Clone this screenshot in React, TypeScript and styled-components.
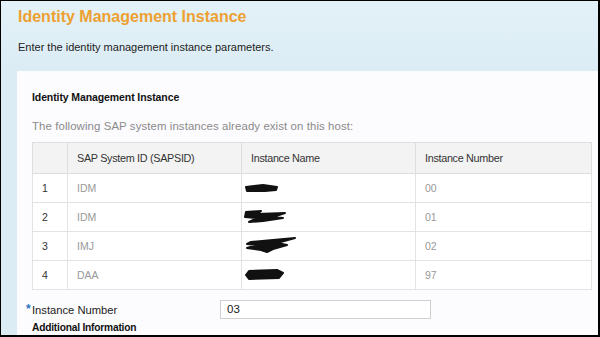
import React from "react";
import styled, { createGlobalStyle } from "styled-components";

const Global = createGlobalStyle`
  html, body { margin: 0; padding: 0; background: #ffffff; }
  * { box-sizing: border-box; }
`;

const Frame = styled.div`
  width: 600px;
  height: 337px;
  overflow: hidden;
  border-style: solid;
  border-color: #000;
  border-width: 1px 2px 2px 1px;
  background: linear-gradient(#e3f2f9, #dcecf4 70px, #dcecf4);
  display: flex;
  flex-direction: column;
  font-family: "Liberation Sans", Arial, sans-serif;
`;

const Header = styled.header`
  height: 70px;
  padding: 6px 0 0 17px;
`;

const Title = styled.h1`
  margin: 0;
  font-size: 16px;
  line-height: 20px;
  font-weight: bold;
  color: #eda032;
`;

const Subtitle = styled.p`
  margin: 13px 0 0;
  font-size: 11px;
  line-height: 14px;
  color: #222;
`;

const Panel = styled.section`
  flex: 1;
  margin-left: 16px;
  background: #fcfbfe;
  padding: 19px 0 0 15px;
`;

const SectionHeading = styled.h2`
  margin: 0;
  font-size: 10.5px;
  line-height: 14px;
  font-weight: bold;
  color: #111;
  letter-spacing: -0.1px;
`;

const Intro = styled.p`
  margin: 15px 0 0;
  font-size: 11.4px;
  line-height: 14px;
  color: #8a8a8a;
  letter-spacing: 0.1px;
`;

const Table = styled.table`
  margin-top: 9px;
  border-collapse: collapse;
  width: 559px;
  table-layout: fixed;
  border: 1px solid #dedede;
`;

const HeadCell = styled.th<{ $w: number }>`
  width: ${(p) => p.$w}px;
  height: 31px;
  padding: 0 0 0 9px;
  text-align: left;
  font-weight: normal;
  font-size: 10.8px;
  color: #333;
  background: #f3f3f3;
  border: 1px solid #dedede;
  letter-spacing: -0.3px;
`;

const Cell = styled.td<{ $dark?: boolean }>`
  height: 29px;
  padding: 0 0 0 9px;
  font-size: 10.5px;
  color: ${(p) => (p.$dark ? "#333" : "#999999")};
  background: #fff;
  border: 1px solid #e3e3e3;
  vertical-align: middle;
`;

const Scribble = styled.svg`
  display: block;
  margin-left: -8px;
`;

const FormRow = styled.div`
  margin-top: 10px;
  display: flex;
  align-items: center;
  height: 19px;
`;

const Label = styled.label`
  width: 188px;
  font-size: 11.2px;
  color: #222;
  position: relative;
`;

const Star = styled.span`
  position: absolute;
  left: -6px;
  top: -2px;
  color: #2a76bf;
  font-weight: bold;
  font-size: 12px;
`;

const Input = styled.div`
  width: 211px;
  height: 19px;
  border: 1px solid #cfcfcf;
  background: #fff;
  padding-left: 6px;
  font-size: 11.5px;
  line-height: 17px;
  color: #222;
`;

const SubHeading = styled.h3`
  margin: 2px 0 0;
  font-size: 10.2px;
  line-height: 14px;
  font-weight: bold;
  color: #111;
  letter-spacing: -0.2px;
`;

const rows = [
  { n: "1", sid: "IDM", num: "00", path: "M3 5 L20 3 L34 5 L33 8 L22 9 L4 9 Z", w: 38, h: 12 },
  { n: "2", sid: "IDM", num: "01", path: "M3 3 L18 2 L14 5 L42 4 L30 8 L40 9 L20 12 L6 13 L14 9 L2 8 Z", w: 46, h: 16 },
  { n: "3", sid: "IMJ", num: "02", path: "M8 5 L30 3 L52 1 L34 6 L44 8 L30 12 L24 15 L18 13 L4 11 L14 8 L4 7 Z", w: 56, h: 18 },
  { n: "4", sid: "DAA", num: "97", path: "M6 2 L34 1 L40 4 L36 9 L6 10 L3 6 Z", w: 44, h: 12 },
];

export default function App() {
  return (
    <>
      <Global />
      <Frame>
        <Header>
          <Title>Identity Management Instance</Title>
          <Subtitle>Enter the identity management instance parameters.</Subtitle>
        </Header>
        <Panel>
          <SectionHeading>Identity Management Instance</SectionHeading>
          <Intro>The following SAP system instances already exist on this host:</Intro>
          <Table>
            <thead>
              <tr>
                <HeadCell $w={35}></HeadCell>
                <HeadCell $w={174}>SAP System ID (SAPSID)</HeadCell>
                <HeadCell $w={174}>Instance Name</HeadCell>
                <HeadCell $w={176}>Instance Number</HeadCell>
              </tr>
            </thead>
            <tbody>
              {rows.map((r) => (
                <tr key={r.n}>
                  <Cell $dark>{r.n}</Cell>
                  <Cell>{r.sid}</Cell>
                  <Cell>
                    <Scribble width={r.w} height={r.h} viewBox={`0 0 ${r.w} ${r.h}`}>
                      <path d={r.path} fill="#111" stroke="#111" strokeWidth="2" strokeLinejoin="round" />
                    </Scribble>
                  </Cell>
                  <Cell>{r.num}</Cell>
                </tr>
              ))}
            </tbody>
          </Table>
          <FormRow>
            <Label>
              <Star>*</Star>Instance Number
            </Label>
            <Input>03</Input>
          </FormRow>
          <SubHeading>Additional Information</SubHeading>
        </Panel>
      </Frame>
    </>
  );
}
